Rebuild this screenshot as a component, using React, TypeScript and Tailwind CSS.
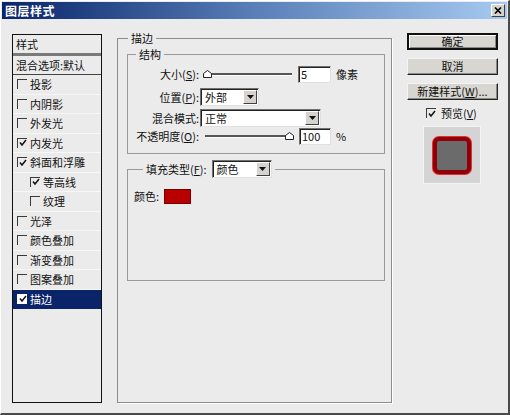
import React from 'react';

type Item = { label: string; checked: boolean; indent?: boolean; selected?: boolean };

const ITEMS: Item[] = [
  { label: '投影', checked: false },
  { label: '内阴影', checked: false },
  { label: '外发光', checked: false },
  { label: '内发光', checked: true },
  { label: '斜面和浮雕', checked: true },
  { label: '等高线', checked: true, indent: true },
  { label: '纹理', checked: false, indent: true },
  { label: '光泽', checked: false },
  { label: '颜色叠加', checked: false },
  { label: '渐变叠加', checked: false },
  { label: '图案叠加', checked: false },
  { label: '描边', checked: true, selected: true },
];

function CheckBox({ checked, light }: { checked: boolean; light?: boolean }) {
  return (
    <span
      className={`w-[10px] h-[10px] shrink-0 flex items-center justify-center border-t border-l ${
        light ? 'bg-white border-white' : 'border-[#3a3a3a]'
      }`}
    >
      {checked && (
        <svg width="8" height="8" viewBox="0 0 8 8">
          <path d="M1 3.5 L3 6 L7 1" fill="none" stroke="#111" strokeWidth="1.5" />
        </svg>
      )}
    </span>
  );
}

function Slider({ at }: { at: 'start' | 'end' }) {
  return (
    <div className="relative w-[91px] h-[17px]">
      <div className="absolute left-[2px] right-[2px] top-[7px] h-[3px] bg-[#555] border-b border-white" />
      <svg
        width="9"
        height="8"
        viewBox="0 0 9 8"
        className={`absolute top-[4px] ${at === 'start' ? 'left-0' : 'right-0'}`}
      >
        <path d="M0.5 7.5 V3.5 L4.5 0.5 L8.5 3.5 V7.5 Z" fill="#fff" stroke="#222" />
      </svg>
    </div>
  );
}

function Input({ value, w }: { value: string; w: string }) {
  return (
    <div
      className={`${w} h-[17px] bg-white border border-t-[#707070] border-l-[#707070] border-r-[#e0e0e0] border-b-[#e0e0e0] pl-[2px] leading-[15px] shadow-[inset_1px_1px_0_#222]`}
    >
      {value}
    </div>
  );
}

function Select({ value, w }: { value: string; w: string }) {
  return (
    <div
      className={`${w} h-[18px] bg-white border border-t-[#707070] border-l-[#707070] border-r-[#e0e0e0] border-b-[#e0e0e0] shadow-[inset_1px_1px_0_#222] flex items-center justify-between pl-[4px] pr-[1px]`}
    >
      <span className="leading-[14px]">{value}</span>
      <span className="w-[14px] h-[14px] bg-[#d6d3ce] border border-t-white border-l-white border-r-[#404040] border-b-[#404040] flex items-center justify-center">
        <svg width="7" height="4" viewBox="0 0 7 4">
          <path d="M0 0 H7 L3.5 4 Z" fill="#111" />
        </svg>
      </span>
    </div>
  );
}

function Button({ children, primary }: { children: React.ReactNode; primary?: boolean }) {
  return (
    <div
      className={`w-[91px] h-[17px] flex items-center justify-center bg-[#d8d6d0] text-[#111] ${
        primary
          ? 'border-2 border-[#111] shadow-[inset_1px_1px_0_#fff,inset_-1px_-1px_0_#888]'
          : 'border border-t-[#f4f4f4] border-l-[#f4f4f4] border-r-[#222] border-b-[#222] shadow-[inset_-1px_-1px_0_#888]'
      }`}
    >
      {children}
    </div>
  );
}

export default function App() {
  return (
    <div className="w-[510px] h-[415px] bg-[#ebebeb] border-t border-l border-t-white border-l-white border-r-2 border-b-2 border-r-[#4a4a4a] border-b-[#4a4a4a] flex flex-col text-[11px] text-[#111] font-['Noto_Sans_CJK_SC','Noto_Sans',sans-serif] overflow-hidden">
      {/* Title bar */}
      <div className="h-[17px] mx-[1px] mt-[1px] bg-gradient-to-r from-[#0a246a] via-[#5a7fb8] to-[#a6caf0] flex items-center justify-between pl-[3px] pr-[2px]">
        <span className="text-white font-bold text-[12px] leading-[14px] tracking-[0.5px]">图层样式</span>
        <span className="w-[14px] h-[13px] bg-[#d6d3ce] border border-t-white border-l-white border-r-[#404040] border-b-[#404040] flex items-center justify-center">
          <svg width="8" height="7" viewBox="0 0 8 7">
            <path d="M1 0.5 L7 6.5 M7 0.5 L1 6.5" stroke="#000" strokeWidth="1.6" />
          </svg>
        </span>
      </div>

      {/* Body */}
      <div className="flex items-start pl-[11px] pt-[11px]">
        {/* Style list */}
        <div className="mt-[4px] w-[90px] h-[369px] border border-[#111] flex flex-col">
          <div className="h-[18px] flex items-center pl-[3px]">样式</div>
          <div className="h-[3px] bg-[#7a7a7a]" />
          <div className="h-[19px] flex items-center pl-[3px] border-b border-[#444]">混合选项:默认</div>
          {ITEMS.map((it) => (
            <div
              key={it.label}
              className={`h-[19.5px] flex items-center gap-[3px] border-b border-[#f6f6f6] ${
                it.indent ? 'pl-[17px]' : 'pl-[4px]'
              } ${it.selected ? 'bg-[#0a246a] text-white border-b-[#0a246a]' : ''}`}
            >
              <CheckBox checked={it.checked} light={it.selected} />
              <span className="leading-[14px]">{it.label}</span>
            </div>
          ))}
        </div>

        {/* Main group */}
        <fieldset className="ml-[15px] w-[275px] h-[373px] border border-[#8c8c8c] shadow-[1px_1px_0_#fff]">
          <legend className="ml-[10px] px-[3px] leading-[16px]">描边</legend>

          <fieldset className="ml-[9px] w-[258px] h-[108px] border border-[#9a9a9a]">
            <legend className="ml-[8px] px-[3px] leading-[16px]">结构</legend>
            <div className="flex items-center h-[17px] mt-[4px]">
              <span className="w-[71px] text-right">
                大小(<span className="underline">S</span>):
              </span>
              <span className="ml-[4px]">
                <Slider at="start" />
              </span>
              <span className="ml-[4px]">
                <Input value="5" w="w-[33px]" />
              </span>
              <span className="ml-[5px]">像素</span>
            </div>
            <div className="flex items-center h-[18px] mt-[5px]">
              <span className="w-[71px] text-right">
                位置(<span className="underline">P</span>):
              </span>
              <span className="ml-[1px]">
                <Select value="外部" w="w-[59px]" />
              </span>
            </div>
            <div className="flex items-center h-[18px] mt-[3px]">
              <span className="w-[71px] text-right">混合模式:</span>
              <span className="ml-[1px]">
                <Select value="正常" w="w-[121px]" />
              </span>
            </div>
            <div className="flex items-center h-[17px] mt-[1px]">
              <span className="w-[71px] text-right">
                不透明度(<span className="underline">O</span>):
              </span>
              <span className="ml-[4px]">
                <Slider at="end" />
              </span>
              <span className="ml-[5px]">
                <Input value="100" w="w-[32px]" />
              </span>
              <span className="ml-[5px]">%</span>
            </div>
          </fieldset>

          <fieldset className="ml-[9px] mt-[6px] w-[258px] h-[121px] border border-[#9a9a9a]">
            <legend className="ml-[15px] px-[3px] flex items-center h-[18px]">
              <span>
                填充类型(<span className="underline">F</span>):
              </span>
              <span className="ml-[5px]">
                <Select value="颜色" w="w-[60px]" />
              </span>
            </legend>
            <div className="flex items-center mt-[10px] pl-[6px]">
              <span>颜色:</span>
              <span className="ml-[5px] w-[27px] h-[15px] bg-[#b80000] border border-[#7a0000]" />
            </div>
          </fieldset>
        </fieldset>

        {/* Right column */}
        <div className="ml-[15px] mt-[3px] flex flex-col">
          <Button primary>确定</Button>
          <div className="mt-[8px]">
            <Button>取消</Button>
          </div>
          <div className="mt-[8px]">
            <Button>
              新建样式(<span className="underline">W</span>)...
            </Button>
          </div>
          <div className="mt-[6px] h-[14px] flex items-center gap-[5px] pl-[19px]">
            <CheckBox checked />
            <span>
              预览(<span className="underline">V</span>)
            </span>
          </div>
          <div className="mt-[6px] ml-[16px] w-[58px] h-[58px] bg-[#d4d4d4] border border-[#f4f4f4] flex items-center justify-center">
            <div className="w-[38px] h-[37px] rounded-[6px] bg-[#6b6b6b] border-[4px] border-[#8f0008] shadow-[0_0_0_1px_#e03030]" />
          </div>
        </div>
      </div>
    </div>
  );
}
